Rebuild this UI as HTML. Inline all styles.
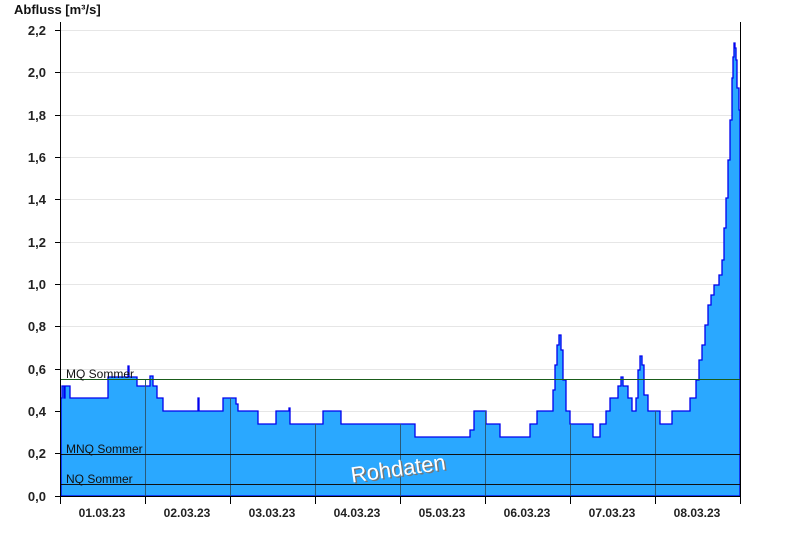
<!DOCTYPE html>
<html><head><style>
body{margin:0;background:#fff;width:800px;height:550px;overflow:hidden}
svg text{font-family:"Liberation Sans",Arial,sans-serif}
</style></head><body>
<svg width="800" height="550" xmlns="http://www.w3.org/2000/svg">
<text x="14" y="14" font-size="13" font-weight="bold" fill="#111">Abfluss [m³/s]</text>
<g stroke="#e6e6e6" stroke-width="1">
<line x1="60" y1="30.5" x2="740" y2="30.5"/><line x1="60" y1="72.5" x2="740" y2="72.5"/>
<line x1="60" y1="115.5" x2="740" y2="115.5"/><line x1="60" y1="157.5" x2="740" y2="157.5"/>
<line x1="60" y1="199.5" x2="740" y2="199.5"/><line x1="60" y1="242.5" x2="740" y2="242.5"/>
<line x1="60" y1="284.5" x2="740" y2="284.5"/><line x1="60" y1="326.5" x2="740" y2="326.5"/>
<line x1="60" y1="369.5" x2="740" y2="369.5"/><line x1="60" y1="411.5" x2="740" y2="411.5"/>
<line x1="60" y1="453.5" x2="740" y2="453.5"/>
</g>
<path fill="#2aa8ff" stroke="#0000ee" stroke-width="1.3" d="M61,496 V398 H62 V386 H64 V398 H65 V386 H67 V386 H69 V386 H70 V398 H108 V377 H128 V366 H129 V377 H137 V386 H150 V376 H153 V386 H157 V398 H163 V411 H198 V398 H199 V411 H223 V398 H236 V404 H238 V411 H258 V424 H276 V411 H289 V408 H290 V424 H323 V411 H341 V424 H415 V437 H470 V430 H474 V411 H486 V424 H500 V437 H530 V424 H537 V411 H553 V390 H555 V365 H557 V345 H559 V335 H561 V350 H563 V380 H566 V411 H570 V424 H593 V437 H600 V424 H606 V411 H610 V398 H618 V386 H621 V377 H623 V386 H628 V398 H632 V411 H636 V398 H638 V370 H640 V356 H642 V365 H644 V395 H648 V411 H660 V424 H672 V411 H690 V398 H696 V380 H699 V360 H702 V345 H705 V325 H708 V305 H711 V295 H714 V285 H719 V275 H722 V260 H724 V228 H726 V198 H728 V160 H730 V120 H732 V78 H733 V57 H734 V43 H735 V48 H736 V60 H737 V88 H739 V110 H740 V496 Z"/>
<g stroke="#2a5a7a" stroke-width="1">
<line x1="145.5" y1="380" x2="145.5" y2="496"/><line x1="230.5" y1="398" x2="230.5" y2="496"/>
<line x1="315.5" y1="424" x2="315.5" y2="496"/><line x1="400.5" y1="424" x2="400.5" y2="496"/>
<line x1="485.5" y1="411" x2="485.5" y2="496"/><line x1="570.5" y1="424" x2="570.5" y2="496"/>
<line x1="655.5" y1="411" x2="655.5" y2="496"/>
</g>
<line x1="60" y1="379.5" x2="740" y2="379.5" stroke="#1a5c1a" stroke-width="1"/>
<line x1="60" y1="454.5" x2="740" y2="454.5" stroke="#111" stroke-width="1"/>
<line x1="60" y1="484.5" x2="740" y2="484.5" stroke="#111" stroke-width="1"/>
<g font-size="12" fill="#111">
<text x="66" y="378">MQ Sommer</text><text x="66" y="453">MNQ Sommer</text><text x="66" y="483">NQ Sommer</text>
</g>
<g transform="rotate(-8 398 468)">
<text x="399.5" y="477.5" font-size="22" fill="#777" text-anchor="middle">Rohdaten</text>
<text x="398" y="476" font-size="22" fill="#fff" text-anchor="middle">Rohdaten</text>
</g>
<line x1="60.5" y1="22" x2="60.5" y2="497" stroke="#000"/>
<line x1="740.5" y1="22" x2="740.5" y2="497" stroke="#000"/>
<line x1="60" y1="496.5" x2="741" y2="496.5" stroke="#000"/>
<g stroke="#000">
<line x1="55" y1="30.5" x2="60" y2="30.5"/><line x1="55" y1="72.5" x2="60" y2="72.5"/>
<line x1="55" y1="115.5" x2="60" y2="115.5"/><line x1="55" y1="157.5" x2="60" y2="157.5"/>
<line x1="55" y1="199.5" x2="60" y2="199.5"/><line x1="55" y1="242.5" x2="60" y2="242.5"/>
<line x1="55" y1="284.5" x2="60" y2="284.5"/><line x1="55" y1="326.5" x2="60" y2="326.5"/>
<line x1="55" y1="369.5" x2="60" y2="369.5"/><line x1="55" y1="411.5" x2="60" y2="411.5"/>
<line x1="55" y1="453.5" x2="60" y2="453.5"/><line x1="55" y1="496.5" x2="60" y2="496.5"/>
<line x1="60.5" y1="496" x2="60.5" y2="504"/><line x1="145.5" y1="496" x2="145.5" y2="504"/>
<line x1="230.5" y1="496" x2="230.5" y2="504"/><line x1="315.5" y1="496" x2="315.5" y2="504"/>
<line x1="400.5" y1="496" x2="400.5" y2="504"/><line x1="485.5" y1="496" x2="485.5" y2="504"/>
<line x1="570.5" y1="496" x2="570.5" y2="504"/><line x1="655.5" y1="496" x2="655.5" y2="504"/>
<line x1="740.5" y1="496" x2="740.5" y2="504"/>
</g>
<g font-size="13" font-weight="bold" fill="#222" text-anchor="end">
<text x="46" y="35">2,2</text><text x="46" y="77">2,0</text><text x="46" y="120">1,8</text>
<text x="46" y="162">1,6</text><text x="46" y="204">1,4</text><text x="46" y="247">1,2</text>
<text x="46" y="289">1,0</text><text x="46" y="331">0,8</text><text x="46" y="374">0,6</text>
<text x="46" y="416">0,4</text><text x="46" y="458">0,2</text><text x="46" y="501">0,0</text>
</g>
<g font-size="12" font-weight="bold" fill="#222" text-anchor="middle">
<text x="102" y="517">01.03.23</text><text x="187" y="517">02.03.23</text><text x="272" y="517">03.03.23</text>
<text x="357" y="517">04.03.23</text><text x="442" y="517">05.03.23</text><text x="527" y="517">06.03.23</text>
<text x="612" y="517">07.03.23</text><text x="697" y="517">08.03.23</text>
</g>
</svg>
</body></html>
